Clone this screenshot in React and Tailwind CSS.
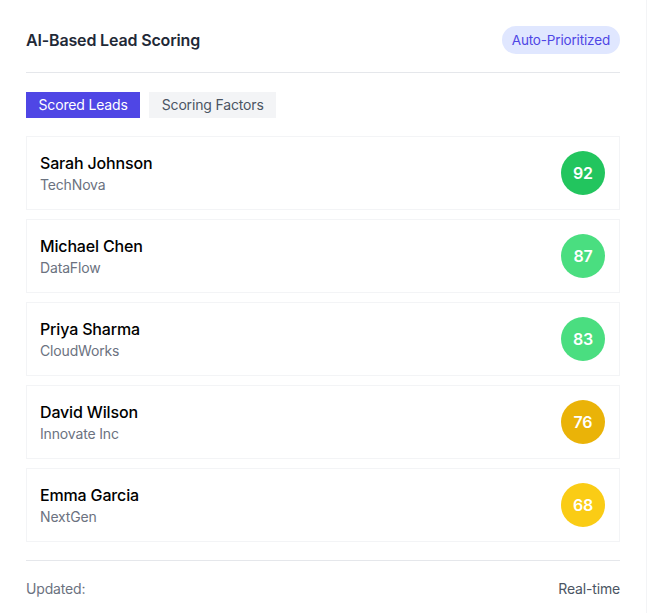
import React from 'react';

const leads = [
  { name: 'Sarah Johnson', company: 'TechNova', score: 92, color: 'bg-[#22c55e]' },
  { name: 'Michael Chen', company: 'DataFlow', score: 87, color: 'bg-[#4ade80]' },
  { name: 'Priya Sharma', company: 'CloudWorks', score: 83, color: 'bg-[#4ade80]' },
  { name: 'David Wilson', company: 'Innovate Inc', score: 76, color: 'bg-[#eab308]' },
  { name: 'Emma Garcia', company: 'NextGen', score: 68, color: 'bg-[#facc15]' },
];

function LeadCard({ lead }) {
  return (
    <div className="flex items-center justify-between border border-[#f3f4f6] bg-white py-3.5 pr-3.5 pl-[13px]">
      <div>
        <div className="text-base leading-6 font-medium text-black">{lead.name}</div>
        <div className="text-sm leading-5 text-[#6b7280]">{lead.company}</div>
      </div>
      <div className={`flex h-11 w-11 items-center justify-center rounded-full ${lead.color} text-base font-semibold text-white`}>
        {lead.score}
      </div>
    </div>
  );
}

export default function App() {
  return (
    <div className="min-h-screen w-[647px] border-r border-[#f3f4f6] bg-white px-[26px] pt-[26px] font-['Inter',sans-serif] tracking-[-0.01em]">
      {/* header */}
      <div className="flex items-center justify-between border-b border-[#e5e7eb] pb-[18px]">
        <h2 className="text-base font-semibold text-[#1f2937]">AI-Based Lead Scoring</h2>
        <span className="rounded-full bg-[#e0e7ff] px-2.5 py-1 text-[13.5px] text-[#4f46e5]">Auto-Prioritized</span>
      </div>

      {/* tabs */}
      <div className="mt-[19px] flex gap-[9px]">
        <button className="bg-[#4f46e5] px-[12.5px] py-[3px] text-sm text-white">Scored Leads</button>
        <button className="bg-[#f3f4f6] px-[12.5px] py-[3px] text-sm text-[#4b5563]">Scoring Factors</button>
      </div>

      {/* leads */}
      <div className="mt-[18px] flex flex-col gap-[9px]">
        {leads.map((lead) => (
          <LeadCard key={lead.name} lead={lead} />
        ))}
      </div>

      {/* footer */}
      <div className="mt-[18px] flex justify-between border-t border-[#e5e7eb] pt-[18px] text-sm text-[#6b7280]">
        <span>Updated:</span>
        <span className="text-[#4b5563]">Real-time</span>
      </div>
    </div>
  );
}
